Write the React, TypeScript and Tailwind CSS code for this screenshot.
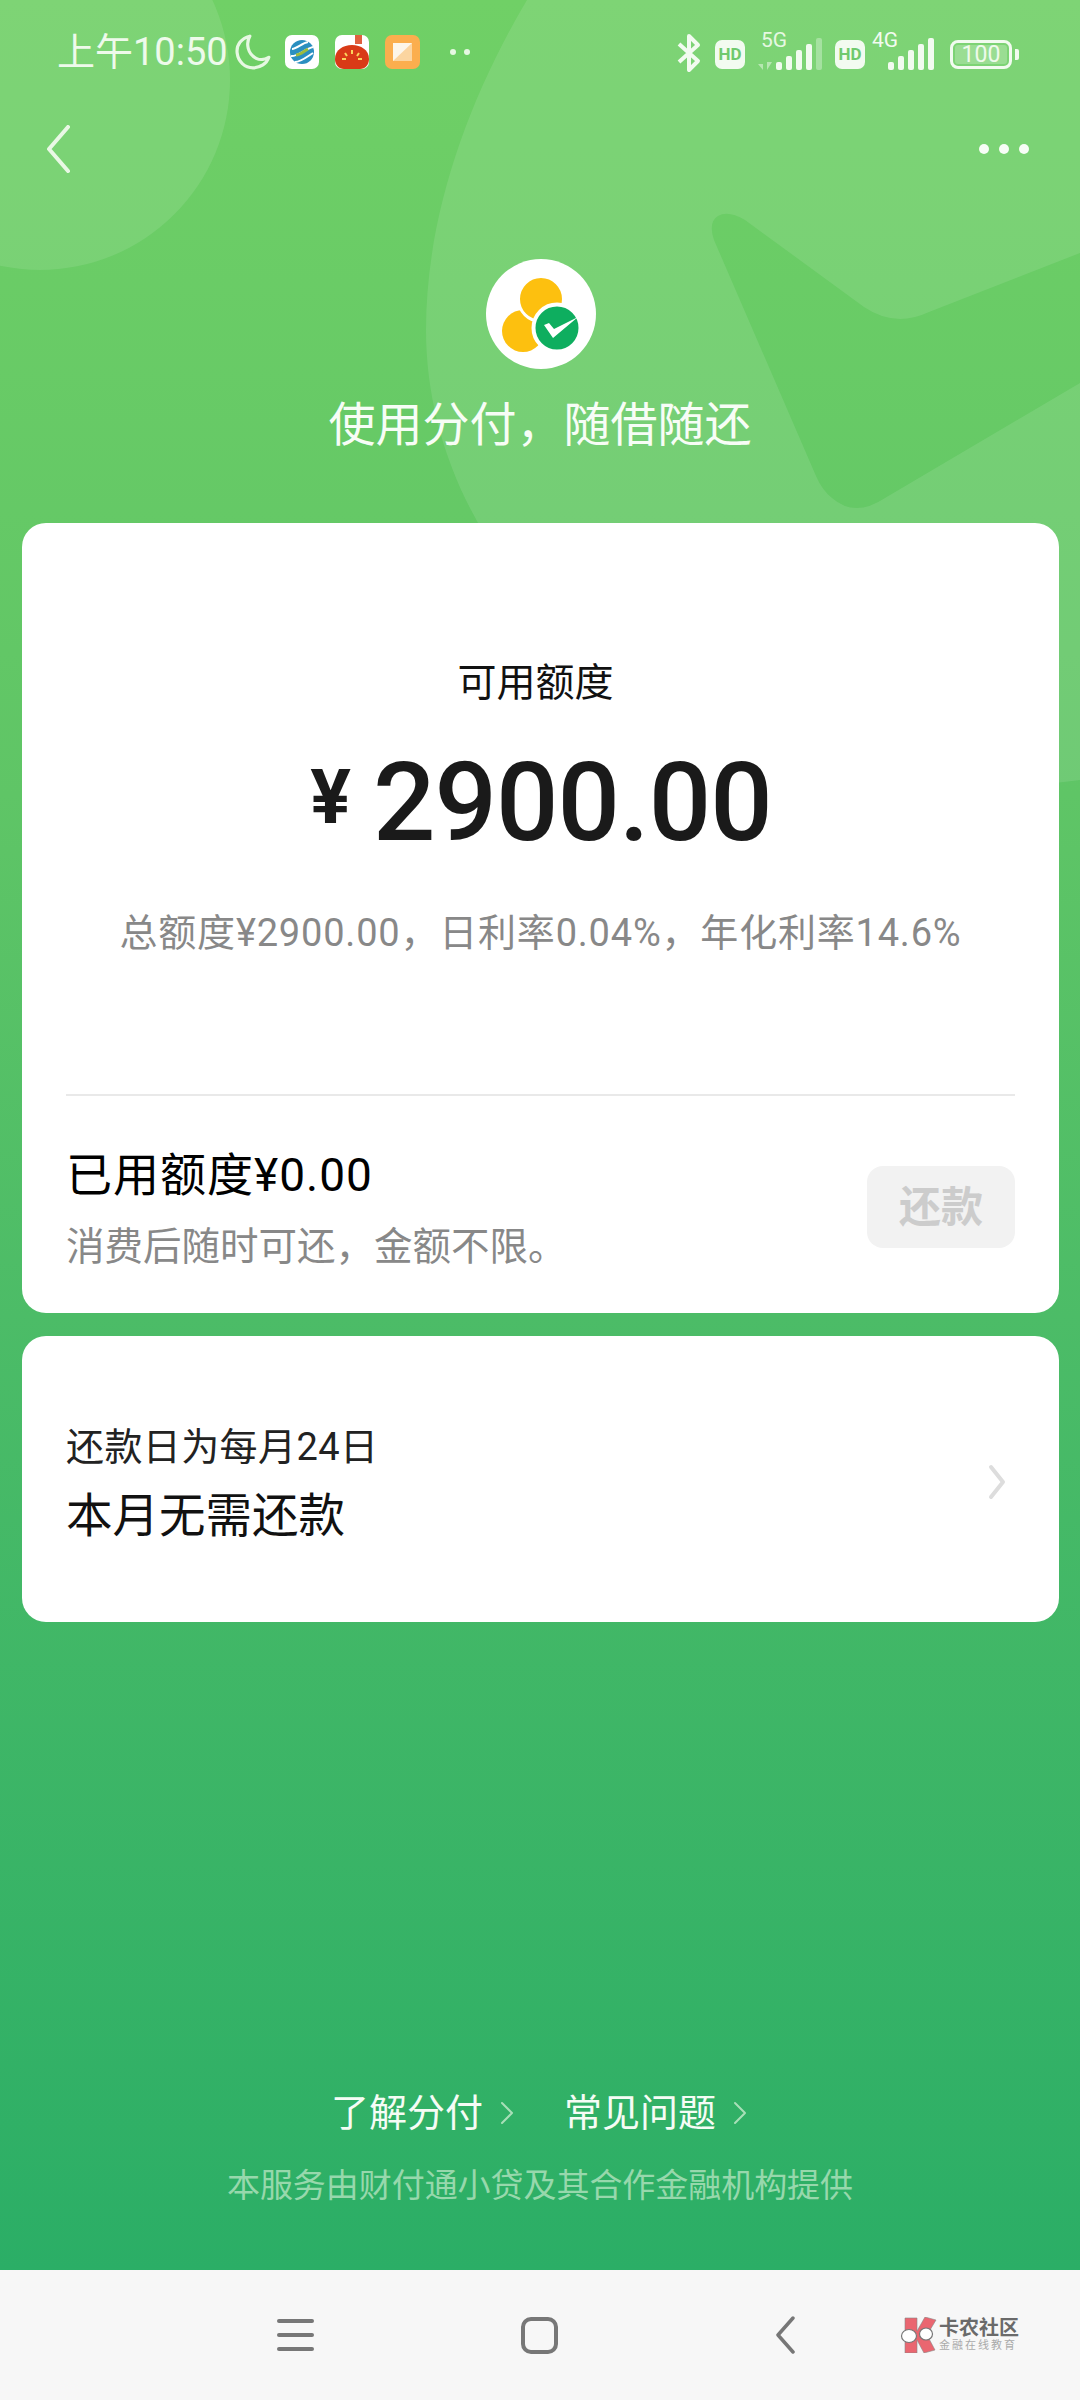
import React from 'react';

const Bars = ({ lastDim }: { lastDim?: boolean }) => (
  <svg width="48" height="32" viewBox="0 0 48 32" className="block">
    <rect x="0" y="24" width="6" height="8" rx="2" fill="#f2fbf0" />
    <rect x="10" y="18" width="6" height="14" rx="2" fill="#f2fbf0" />
    <rect x="20" y="12" width="6" height="20" rx="2" fill="#f2fbf0" />
    <rect x="30" y="6" width="6" height="26" rx="2" fill="#f2fbf0" />
    <rect x="40" y="0" width="6" height="32" rx="2" fill="#f2fbf0" opacity={lastDim ? 0.35 : 1} />
  </svg>
);

const HdBadge = () => (
  <div className="w-[30px] h-[29px] rounded-[7px] bg-[#f2fbf0] flex items-center justify-center text-[17px] leading-none font-bold text-[#6fc96e]">
    HD
  </div>
);

const StatusBar = () => (
  <div className="h-[104px] pl-[57px] flex items-center text-[#eefaeb] relative">
    <span className="text-[38px] leading-none w-[176px] whitespace-nowrap">上午10:50</span>
    <svg width="38" height="38" viewBox="0 0 36 36" className="ml-[1px]" fill="none">
      <path d="M15 3C7 5 2 11 3 19c1 8 7 14 15 14 7 0 13-4 15-10-3 2-8 3-12 1C13 20 11 10 15 3Z" stroke="#e6f8e2" strokeWidth="3" strokeLinejoin="round" />
    </svg>
    {/* notification icons */}
    <svg width="34" height="34" viewBox="0 0 34 34" className="ml-[13px]">
      <rect width="34" height="34" rx="7" fill="#fff" />
      <circle cx="17" cy="17" r="12" fill="#2a8fc0" />
      <path d="M6 21c6 1 14-7 22-9M7 14c5 0 10-6 16-7M10 27c6 0 13-6 18-9" fill="none" stroke="#fff" strokeWidth="2" />
      <path d="M11 20c4 0 8-4 12-6" fill="none" stroke="#9dbb3d" strokeWidth="3" />
    </svg>
    <svg width="34" height="34" viewBox="0 0 34 34" className="ml-[16px]">
      <rect width="34" height="34" rx="7" fill="#fff" />
      <rect x="20" y="0" width="7" height="9" fill="#e0603e" />
      <path d="M0 24C0 15 8 10 17 10s17 5 17 14c0 6-4 10-9 10H9c-5 0-9-4-9-10Z" fill="#d93a17" />
      <path d="M17 15v4M10 18l2 3M24 18l-2 3M7 24h4M23 24h4" stroke="#fbd45c" strokeWidth="2" />
    </svg>
    <svg width="35" height="34" viewBox="0 0 35 34" className="ml-[16px]">
      <rect width="35" height="34" rx="7" fill="#fbae4e" />
      <rect x="8" y="8" width="19" height="18" fill="#fdf6ea" />
      <path d="M27 8v18H8Z" fill="#fbd5a0" />
    </svg>
    <div className="ml-[30px] flex gap-[8px]">
      <div className="w-[6px] h-[6px] rounded-full bg-[#e6f8e2]" />
      <div className="w-[6px] h-[6px] rounded-full bg-[#e6f8e2]" />
    </div>

    <div className="ml-auto pr-[61px] flex items-end h-[40px] mt-[2px]">
      <svg width="26" height="40" viewBox="0 0 26 40" fill="none" className="block">
        <path d="M3 11 22 28 13 37V3l9 9L3 29" stroke="#f2fbf0" strokeWidth="4" strokeLinejoin="round" />
      </svg>
      <div className="ml-[13px] mb-[4px]"><HdBadge /></div>
      <div className="relative ml-[13px] w-[66px] h-[37px] mb-[3px]">
        <span className="absolute left-[3px] top-[-5px] text-[21px] leading-[24px] text-[#e6f8e2]">5G</span>
        <svg width="15" height="14" viewBox="0 0 15 14" className="absolute left-0 bottom-0">
          <path d="M5 0v14L0 8h5ZM9 0v14l5-8H9Z" fill="#e6f8e2" opacity="0.55" />
        </svg>
        <div className="absolute left-[18px] bottom-0"><Bars lastDim /></div>
      </div>
      <div className="ml-[11px] mb-[4px]"><HdBadge /></div>
      <div className="relative ml-[7px] w-[66px] h-[37px] mb-[3px]">
        <span className="absolute left-0 top-[-5px] text-[21px] leading-[24px] text-[#f2fbf0]">4G</span>
        <div className="absolute left-[16px] bottom-0"><Bars /></div>
      </div>
      <div className="ml-[12px] mb-[4px] flex items-center">
        <div className="relative w-[62px] h-[29px] rounded-[8px] border-[3px] border-[#f2fbf0] p-[2px] flex items-center justify-center">
          <div className="w-full h-full rounded-[3px] bg-[#f2fbf0] opacity-25" />
          <span className="absolute inset-0 flex items-center justify-center text-[23px] leading-none text-[#eefaeb]">100</span>
        </div>
        <div className="ml-[3px] w-[4px] h-[11px] rounded-r-[2px] bg-[#f2fbf0]" />
      </div>
    </div>
  </div>
);

const Chevron = ({ color, width = 14, height = 24, sw = 2 }: { color: string; width?: number; height?: number; sw?: number }) => (
  <svg width={width} height={height} viewBox={`0 0 ${width} ${height}`} fill="none" className="block">
    <path d={`M${sw} ${sw}L${width - sw} ${height / 2}L${sw} ${height - sw}`} stroke={color} strokeWidth={sw} strokeLinecap="round" strokeLinejoin="round" />
  </svg>
);

const BrandLogo = () => (
  <div className="w-[110px] h-[110px] rounded-full bg-white">
    <svg width="110" height="110" viewBox="0 0 110 110">
      <circle cx="37" cy="72" r="21" fill="#fdc00f" />
      <circle cx="55" cy="40" r="22.5" fill="#fdc00f" stroke="#fff" strokeWidth="3" />
      <circle cx="71" cy="69" r="23.5" fill="#0eae5f" stroke="#fff" strokeWidth="4" />
      <path d="M58 66l5-2 5 6 24-12-25 21Z" fill="#fff" />
    </svg>
  </div>
);

const WatermarkLogo = () => (
  <div className="flex items-center">
    <svg width="38" height="36" viewBox="0 0 38 36">
      <path d="M5 1l12 0 0 13 8-14 11 3-9 15 8 15-11 3-7-13 0 13-12 0Z" fill="#ea6670" stroke="#888" strokeWidth="0.6" />
      <ellipse cx="9" cy="19" rx="7.5" ry="6.5" fill="#fff" stroke="#777" strokeWidth="1.2" />
      <ellipse cx="26" cy="17" rx="6.5" ry="6" fill="#fff" stroke="#777" strokeWidth="1.2" />
    </svg>
    <div className="ml-[1px] flex flex-col">
      <span className="text-[20px] leading-[22px] font-bold text-[#6a6a6a] whitespace-nowrap">卡农社区</span>
      <span className="text-[11px] leading-[14px] tracking-[2px] text-[#aaaaaa] whitespace-nowrap">金融在线教育</span>
    </div>
  </div>
);

export default function App() {
  return (
    <div className="w-[1080px] h-[2400px] flex flex-col overflow-hidden font-['Roboto','Noto_Sans_CJK_SC',sans-serif]">
      <div className="relative flex-1 flex flex-col bg-[linear-gradient(180deg,#70d066_0%,#5fc566_35%,#4cbc67_58%,#2bae66_100%)]">
        {/* background shapes */}
        <svg width="1080" height="800" viewBox="0 0 1080 800" className="absolute left-0 top-0" fill="#ffffff" fillOpacity="0.1">
          <circle cx="40" cy="80" r="190" />
          <path d="M527 0C465 105 426 220 426 330C426 590 700 830 1080 780V383L885 498Q855 518 832 498Q822 490 816 476L714 240Q708 222 718 216Q728 210 745 220L864 307Q895 328 929 312L1080 253V0Z" />
        </svg>

        <div className="relative flex flex-col h-full">
          <StatusBar />

          <div className="h-[90px] pl-[46px] pr-[51px] flex items-center justify-between">
            <svg width="24" height="48" viewBox="0 0 24 48" fill="none">
              <path d="M22 2L3 24L22 46" stroke="#e9f8e5" strokeWidth="4" strokeLinecap="round" strokeLinejoin="round" />
            </svg>
            <div className="flex gap-[10px]">
              <div className="w-[10px] h-[10px] rounded-full bg-[#f7fdf6]" />
              <div className="w-[10px] h-[10px] rounded-full bg-[#f7fdf6]" />
              <div className="w-[10px] h-[10px] rounded-full bg-[#f7fdf6]" />
            </div>
          </div>

          <div className="mt-[65px] flex justify-center pl-[2px]">
            <BrandLogo />
          </div>
          <div className="mt-[28px] h-[56px] text-center text-[47px] leading-[56px] text-[#f7fdf6]">
            使用分付，随借随还
          </div>

          {/* quota card */}
          <div className="mt-[70px] ml-[22px] mr-[21px] h-[790px] rounded-[24px] bg-white flex flex-col">
            <div className="pt-[130px] pr-[10px] text-center text-[39px] leading-[60px] text-[#111111]">可用额度</div>
            <div className="mt-[25px] h-[127px] flex justify-center text-[#1a1a1a] pl-[1px]">
              <span className="mt-[14px] text-[76px] leading-[90px] font-bold">¥</span>
              <span className="ml-[22px] text-[110px] leading-[130px] font-medium tracking-[-1px]">2900.00</span>
            </div>
            <div className="mt-[40px] text-center text-[38px] leading-[56px] tracking-[0.8px] text-[#888888] whitespace-nowrap">
              总额度¥2900.00，日利率0.04%，年化利率14.6%
            </div>

            <div className="mt-[133px] mx-[44px] h-[2px] bg-[#e9e9e9]" />

            <div className="mt-[50px] ml-[44px] mr-[44px] flex justify-between items-start">
              <div className="flex flex-col">
                <span className="text-[46px] leading-[58px] tracking-[1px] text-black">已用额度¥0.00</span>
                <span className="mt-[17px] text-[38.5px] leading-[52px] text-[#888888]">消费后随时可还，金额不限。</span>
              </div>
              <div className="mt-[20px] w-[148px] h-[82px] rounded-[16px] bg-[#f2f2f2] flex items-center justify-center text-[42px] font-bold text-[#cccccc]">
                还款
              </div>
            </div>
          </div>

          {/* repayment card */}
          <div className="mt-[23px] ml-[22px] mr-[21px] h-[286px] rounded-[24px] bg-white pl-[44px] pr-[52px] flex items-center justify-between">
            <div className="flex flex-col mt-[10px]">
              <span className="text-[38px] leading-[50px] tracking-[0.4px] text-[#222222]">还款日为每月24日</span>
              <span className="mt-[14px] text-[46.5px] leading-[60px] text-[#111111]">本月无需还款</span>
            </div>
            <div className="mt-[6px]"><Chevron color="#dddddd" width={20} height={38} sw={4} /></div>
          </div>

          {/* footer links */}
          <div className="mt-auto pb-[62px] flex flex-col items-center">
            <div className="flex items-center text-[38px] leading-[50px] text-[#f5fcf5] pr-[2px]">
              <span>了解分付</span>
              <div className="ml-[17px]"><Chevron color="#a8dfb8" /></div>
              <span className="ml-[50px]">常见问题</span>
              <div className="ml-[17px]"><Chevron color="#a8dfb8" /></div>
            </div>
            <div className="mt-[26px] text-[33px] leading-[44px] tracking-[-0.05px] text-[#97d8ac] whitespace-nowrap">
              本服务由财付通小贷及其合作金融机构提供
            </div>
          </div>
        </div>
      </div>

      {/* android nav bar */}
      <div className="h-[130px] bg-[#f7f7f7] flex items-center pl-[277px]">
        <div className="flex flex-col gap-[10px] w-[37px]">
          <div className="h-[4px] rounded-full bg-[#777777]" />
          <div className="h-[4px] rounded-full bg-[#777777]" />
          <div className="h-[4px] rounded-full bg-[#777777]" />
        </div>
        <div className="ml-[207px] w-[37px] h-[37px] rounded-[10px] border-[4px] border-[#777777]" />
        <svg width="20" height="38" viewBox="0 0 20 38" fill="none" className="ml-[217px]">
          <path d="M18 2L3 19L18 36" stroke="#777777" strokeWidth="3.5" strokeLinecap="round" strokeLinejoin="round" />
        </svg>
        <div className="ml-[105px]"><WatermarkLogo /></div>
      </div>
    </div>
  );
}
